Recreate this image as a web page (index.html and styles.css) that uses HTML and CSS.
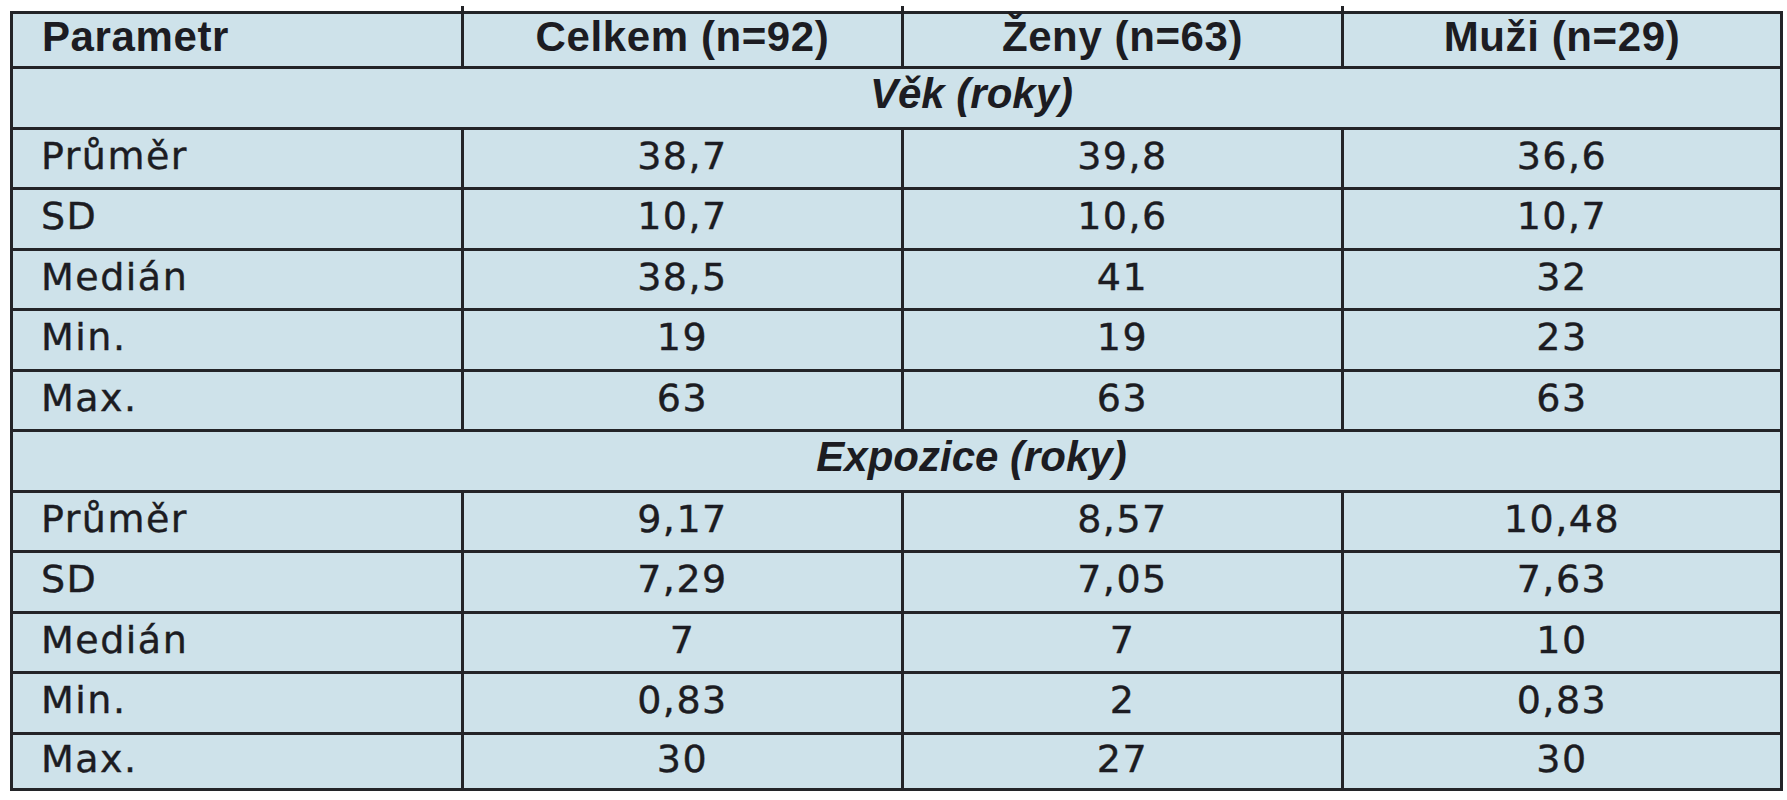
FILE: index.html
```html
<!DOCTYPE html>
<html lang="cs">
<head>
<meta charset="utf-8">
<title>Tabulka</title>
<link rel="stylesheet" href="styles.css">
</head>
<body>
<table class="stats">
  <colgroup>
    <col class="c-param">
    <col class="c-val">
    <col class="c-val">
    <col class="c-val-last">
  </colgroup>
  <thead>
    <tr class="head">
      <th class="lbl">Parametr</th>
      <th class="tick">Celkem (n=92)</th>
      <th class="tick">Ženy (n=63)</th>
      <th class="tick">Muži (n=29)</th>
    </tr>
  </thead>
  <tbody>
    <tr class="section"><td colspan="4">Věk (roky)</td></tr>
    <tr><td class="lbl">Průměr</td><td>38,7</td><td>39,8</td><td>36,6</td></tr>
    <tr><td class="lbl">SD</td><td>10,7</td><td>10,6</td><td>10,7</td></tr>
    <tr><td class="lbl">Medián</td><td>38,5</td><td>41</td><td>32</td></tr>
    <tr><td class="lbl">Min.</td><td>19</td><td>19</td><td>23</td></tr>
    <tr><td class="lbl">Max.</td><td>63</td><td>63</td><td>63</td></tr>
    <tr class="section"><td colspan="4">Expozice (roky)</td></tr>
    <tr><td class="lbl">Průměr</td><td>9,17</td><td>8,57</td><td>10,48</td></tr>
    <tr><td class="lbl">SD</td><td>7,29</td><td>7,05</td><td>7,63</td></tr>
    <tr><td class="lbl">Medián</td><td>7</td><td>7</td><td>10</td></tr>
    <tr><td class="lbl">Min.</td><td>0,83</td><td>2</td><td>0,83</td></tr>
    <tr class="last"><td class="lbl">Max.</td><td class="tick">30</td><td class="tick">27</td><td class="tick">30</td></tr>
  </tbody>
</table>
</body>
</html>
```
FILE: styles.css
```css
html, body {
  margin: 0;
  padding: 0;
  background: #ffffff;
}

.stats {
  margin: 11px 0 0 10px;
  width: 1770px;
  border-collapse: collapse;
  table-layout: fixed;
  background: #cee2ea;
  color: #1c1c22;
  border: 3px solid #232428;
}

.c-param { width: 451px; }
.c-val { width: 440px; }
.c-val-last { width: 439px; }

.stats th,
.stats td {
  border: 3px solid #232428;
  text-align: center;
  padding: 0;
  box-sizing: border-box;
}

.stats tbody td {
  font-family: "DejaVu Sans", sans-serif;
  font-size: 38px;
  letter-spacing: 1.5px;
  height: 60.5px;
  line-height: 1;
  padding-bottom: 5px;
  -webkit-text-stroke: 0.4px #1c1c22;
}

.stats thead th {
  font-family: "Liberation Sans", Arial, sans-serif;
  font-weight: bold;
  font-size: 42px;
  letter-spacing: 0.6px;
  height: 55px;
  line-height: 1;
  padding-bottom: 6px;
}

.stats .lbl {
  text-align: left;
  padding-left: 28px;
}

.stats thead th.lbl {
  padding-left: 29px;
}

.stats .section td {
  font-family: "Liberation Sans", Arial, sans-serif;
  font-weight: bold;
  font-style: italic;
  font-size: 42px;
  letter-spacing: 0;
  padding-left: 150px;
  padding-bottom: 8px;
  -webkit-text-stroke: 0;
}

.stats .last td {
  height: 56px;
}

/* small overhangs of the column rules past the outer frame */
.stats .tick {
  position: relative;
}

.stats thead .tick::before {
  content: "";
  position: absolute;
  left: -3px;
  top: -8px;
  width: 3px;
  height: 6px;
  background: #232428;
}

.stats .last .tick::after {
  content: "";
  position: absolute;
  left: -3px;
  bottom: -7px;
  width: 3px;
  height: 5px;
  background: #232428;
}
```
